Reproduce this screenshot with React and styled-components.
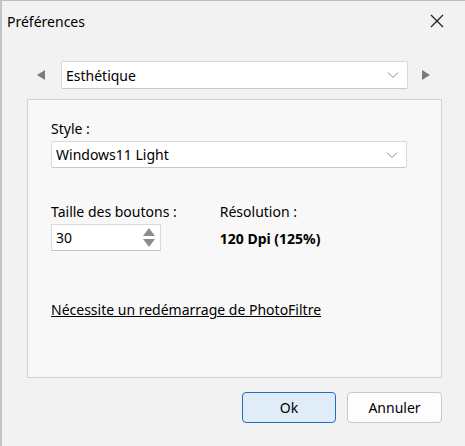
import React from 'react'
import styled, { createGlobalStyle } from 'styled-components'

const GlobalStyle = createGlobalStyle`
  * {
    margin: 0;
    padding: 0;
    box-sizing: border-box;
  }

  body {
    background-color: #f0f0f0;
    font-family: "Noto Sans", "Open Sans", sans-serif;
    font-size: 14px;
    color: #000;
  }
`

const Window = styled.div`
  width: 465px;
  height: 446px;
  background: #f2f2f2;
  border-top: 1px solid #bcbcbc;
  border-left: 2px solid #c4c4c4;
  display: flex;
  flex-direction: column;
`

const TitleBar = styled.div`
  height: 40px;
  display: flex;
  align-items: center;
  justify-content: space-between;
  padding: 0 20px 0 5px;
  font-size: 14px;
`

const CloseButton = styled.div`
  width: 16px;
  height: 16px;
  display: flex;
  align-items: center;
  justify-content: center;
`

const PageRow = styled.div`
  margin-top: 20px;
  display: flex;
  align-items: center;
  padding-left: 35px;
  height: 28px;
`

const Arrow = styled.div`
  width: 0;
  height: 0;
  border-top: 5px solid transparent;
  border-bottom: 5px solid transparent;
  ${p => p.$dir === 'left'
    ? 'border-right: 8px solid #7a7a7a; margin-right: 16px;'
    : 'border-left: 8px solid #7a7a7a; margin-left: 14px;'}
`

const Combo = styled.div`
  width: ${p => p.$width}px;
  height: ${p => p.$height || 27}px;
  background: #fff;
  border: 1px solid #d9d9d9;
  border-bottom-color: #c8c8c8;
  border-radius: 2px;
  display: flex;
  align-items: center;
  justify-content: space-between;
  padding: 0 8px 0 4px;
  font-size: 14px;
`

const Panel = styled.div`
  margin: 10px 0 0 25px;
  width: 415px;
  height: 279px;
  background: #f8f8f8;
  border: 1px solid #d2d2d2;
  padding: 19px 23px 0 23px;
  display: flex;
  flex-direction: column;
`

const Label = styled.div`
  font-size: 14px;
  line-height: 20px;
  margin-bottom: 2px;
`

const Columns = styled.div`
  margin-top: 34px;
  display: flex;
  gap: 43px;
`

const Column = styled.div`
  display: flex;
  flex-direction: column;
`

const SpinBox = styled.div`
  width: 110px;
  height: 27px;
  background: #fff;
  border: 1px solid #d9d9d9;
  border-bottom-color: #c8c8c8;
  display: flex;
  align-items: center;
  justify-content: space-between;
  padding: 0 4px 0 4px;
`

const Spinner = styled.div`
  width: 15px;
  height: 25px;
  display: flex;
  flex-direction: column;
  align-items: center;
  justify-content: center;
  gap: 3px;
`

const Tri = styled.div`
  width: 0;
  height: 0;
  border-left: 6px solid transparent;
  border-right: 6px solid transparent;
  ${p => p.$up
    ? 'border-bottom: 8px solid #8c8c8c;'
    : 'border-top: 8px solid #8c8c8c;'}
`

const Value = styled.div`
  font-weight: 700;
  font-size: 14px;
  line-height: 20px;
  margin-top: 5px;
`

const Link = styled.a`
  margin-top: 49px;
  color: #000;
  text-decoration: underline;
  font-size: 14px;
`

const Footer = styled.div`
  display: flex;
  justify-content: flex-end;
  gap: 11px;
  padding: 14px 23px 0 0;
`

const Button = styled.button`
  width: ${p => p.$primary ? 94 : 95}px;
  height: 31px;
  border-radius: 4px;
  font-family: inherit;
  font-size: 14px;
  color: #000;
  background: ${p => p.$primary ? '#e0ecf8' : '#fdfdfd'};
  border: 1px solid ${p => p.$primary ? '#1e6fc4' : '#c8c8c8'};
`

function Chevron() {
  return (
    <svg width="12" height="8" viewBox="0 0 12 8">
      <path d="M1 1.5 L6 6.5 L11 1.5" fill="none" stroke="#8a8a8a" strokeWidth="1" />
    </svg>
  )
}

function App() {
  return (
    <Window>
      <GlobalStyle />
      <TitleBar>
        <span>Préférences</span>
        <CloseButton>
          <svg width="14" height="14" viewBox="0 0 14 14">
            <path d="M1 1 L13 13 M13 1 L1 13" stroke="#222" strokeWidth="1.3" />
          </svg>
        </CloseButton>
      </TitleBar>
      <PageRow>
        <Arrow $dir="left" />
        <Combo $width={347} $height={28}>
          <span>Esthétique</span>
          <Chevron />
        </Combo>
        <Arrow $dir="right" />
      </PageRow>
      <Panel>
        <Label>Style :</Label>
        <Combo $width={356}>
          <span>Windows11 Light</span>
          <Chevron />
        </Combo>
        <Columns>
          <Column>
            <Label>Taille des boutons :</Label>
            <SpinBox>
              <span>30</span>
              <Spinner>
                <Tri $up />
                <Tri />
              </Spinner>
            </SpinBox>
          </Column>
          <Column>
            <Label>Résolution :</Label>
            <Value>120 Dpi (125%)</Value>
          </Column>
        </Columns>
        <Link>Nécessite un redémarrage de PhotoFiltre</Link>
      </Panel>
      <Footer>
        <Button $primary>Ok</Button>
        <Button>Annuler</Button>
      </Footer>
    </Window>
  )
}

export default App
